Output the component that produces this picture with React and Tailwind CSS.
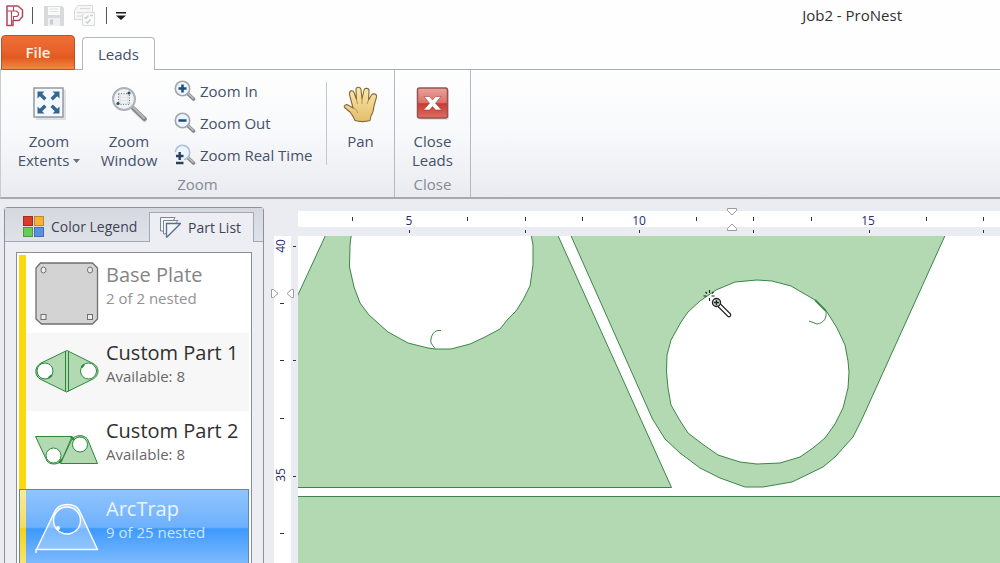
import React from "react";

function AppLogo() {
  return (
    <svg width="18" height="22" viewBox="0 0 18 22" fill="none" stroke="#b5465c" strokeWidth="1.5">
      <path d="M1 1H12L16.500 5V11.500L13 15.500H7V20.500H1Z" strokeLinejoin="round" />
      <path d="M5.500 20V6H1.500M5.500 6H10.500L12.500 8V10L11 11.500H7.500V15M7.500 1.500V6" strokeWidth="1.100" />
    </svg>
  );
}

function SaveIcon() {
  return (
    <svg width="20" height="20" viewBox="0 0 20 20">
      <path d="M0 0H18L20 2V20H0Z" fill="#d8dadd" />
      <rect x="4" y="1" width="12" height="8" fill="#fafafa" />
      <path d="M6 3H14M6 5.500H14" stroke="#dfe1e4" />
      <rect x="4" y="12" width="12" height="8" fill="#eff0f2" />
      <rect x="6" y="13.500" width="3" height="5" fill="#c9ccd0" />
    </svg>
  );
}

function ChecklistIcon() {
  return (
    <svg width="22" height="21" viewBox="0 0 22 21" fill="none" stroke="#d8dadd">
      <path d="M3.500 .5H18.500V14.500H.5V5.500Z" fill="#f6f6f7" />
      <path d="M6 3.500H16M3 7.500H9M3 11H8" />
      <path d="M10.500 7.500H20.500V20.500H8.500V10Z" fill="#fafafa" />
      <path d="M10.500 12L12 13.500L14.500 10.500M16 10.500H19M12 16.500L13.500 18L16.500 14.500" strokeWidth="1.500" stroke="#cccfd3" />
    </svg>
  );
}

function ExtentsIcon() {
  return (
    <svg width="34" height="34" viewBox="0 0 34 34">
      <rect x="4" y="4" width="30" height="30" fill="#000" opacity=".1" />
      <rect x="2" y="2" width="29" height="29" fill="#f3f9ff" stroke="#9599a0" strokeWidth="1.500" />
      {["0", "90", "180", "270"].map((a) => (
        <path
          key={a}
          transform={`rotate(${a} 16.500 16.500)`}
          d="M5.500 5.500H12.500L10.200 7.800L14.500 12.100L12.100 14.500L7.800 10.200L5.500 12.500Z"
          fill="#36658f"
        />
      ))}
    </svg>
  );
}

function WindowIcon() {
  return (
    <svg width="36" height="37" viewBox="0 0 36 37">
      <g transform="translate(1 1)">
        <path d="M21 22L34 34" stroke="#000" strokeWidth="5" opacity=".1" />
        <path d="M20 20L32.500 32" stroke="#85878a" strokeWidth="4.500" strokeLinecap="round" />
        <path d="M21 20L32 31" stroke="#b9babb" strokeWidth="1.800" strokeLinecap="round" />
        <circle cx="12" cy="12" r="11" fill="#eef1f5" stroke="#aeb1b5" strokeWidth="2" />
        <rect x="6.500" y="6.500" width="11" height="11" fill="#e1e3e7" stroke="#7b848f" strokeDasharray="1 1.500" />
        <path d="M9 9H15M9 12H15M9 15H15" stroke="#fff" />
        <circle cx="17" cy="6" r="1.600" fill="#34495e" />
        <circle cx="6" cy="16.500" r="1.600" fill="#34495e" />
      </g>
    </svg>
  );
}

function MagnifierIcon({ kind }) {
  return (
    <svg width="22" height="22" viewBox="0 0 22 22" className="shrink-0">
      <path d="M13 13L19.500 19" stroke="#858789" strokeWidth="3.600" strokeLinecap="round" />
      <path d="M13.500 13L19 18" stroke="#bfc0c1" strokeWidth="1.500" strokeLinecap="round" />
      <circle cx="8.500" cy="8.500" r="7.200" fill="#eaf5fd" stroke={kind === "real" ? "#a9c1d6" : "#a2a6ab"} strokeWidth="1.600" />
      {kind === "in" && <path d="M4.500 8.500H12.500M8.500 4.500V12.500" stroke="#1f4b80" strokeWidth="2.500" />}
      {kind === "out" && <path d="M4.500 8.500H12.500" stroke="#1f4b80" strokeWidth="2.500" />}
      {kind === "real" && (
        <>
          <path d="M0 8H10V22H0Z" fill="#f3f5f9" opacity=".85" />
          <path d="M2 12H9.500M5.700 8V16M2 19H9.500" stroke="#26405f" strokeWidth="2.400" />
        </>
      )}
    </svg>
  );
}

function HandIcon() {
  return (
    <svg width="36" height="37" viewBox="0 0 36 37">
      <defs>
        <linearGradient id="skin" x1="0" y1="0" x2="0" y2="1">
          <stop offset="0" stopColor="#fbe9ab" />
          <stop offset="1" stopColor="#e3bd6b" />
        </linearGradient>
      </defs>
      <path
        d="M12 34.500C11 31 9 29 7 26L1.500 21.500C.5 19.500 3 18 5 19L10 22L6.500 8.500C6 4.500 10 3.500 11 6.500L13.500 13.500L13 3.500C13 .5 17.500 .5 18 3.500L19 13L21 4C21.500 1.500 26 2 26 4.500L25.500 14L28.500 9C30 7 34.500 8 33.500 11L31 20C30.500 25 30 27 28 30L27 34.500C23 36 16 36 12 34.500Z"
        fill="url(#skin)" stroke="#87683a" strokeWidth="1.100" strokeLinejoin="round"
      />
      <path d="M13.500 13.500L14.500 18M19 13V18M25.500 14L24 18M10 22C13 22.500 14.500 25 14.500 27" fill="none" stroke="#b48c45" strokeWidth=".9" />
    </svg>
  );
}

function CloseIcon() {
  return (
    <svg width="34" height="35" viewBox="0 0 34 35">
      <defs>
        <linearGradient id="red" x1="0" y1="0" x2="0" y2="1">
          <stop offset="0" stopColor="#e9a39c" />
          <stop offset=".5" stopColor="#dc7067" />
          <stop offset=".52" stopColor="#c93a31" />
          <stop offset="1" stopColor="#dd6d62" />
        </linearGradient>
      </defs>
      <rect x="3" y="4" width="30" height="30" rx="2" fill="#000" opacity=".1" />
      <rect x="1.500" y="2" width="30" height="30" rx="2" fill="url(#red)" stroke="#8f5550" strokeWidth="1.500" />
      <path d="M8 10.500H13.500L16.500 14L19.500 10.500H25L19.500 17.200L25.500 24H19.500L16.500 20.500L13.500 24H7.500L13.500 17.200Z" fill="#fff" stroke="#8b2f29" strokeWidth=".5" />
    </svg>
  );
}

function LegendIcon() {
  return (
    <svg width="21" height="21" viewBox="0 0 21 21" strokeWidth="1">
      <rect x=".5" y=".5" width="9" height="9" fill="#d93a2b" stroke="#a32c22" />
      <rect x="11.500" y=".5" width="9" height="9" fill="#f5b335" stroke="#b98a35" />
      <rect x=".5" y="11.500" width="9" height="9" fill="#69cc59" stroke="#4c9a45" />
      <rect x="11.500" y="11.500" width="9" height="9" fill="#5a8fe6" stroke="#446cae" />
    </svg>
  );
}

function PartsIcon() {
  return (
    <svg width="21" height="21" viewBox="0 0 21 21" fill="#f3f6fb" stroke="#7e8590">
      <path d="M.5 14V.5H15L13 4L3 14Z" />
      <path d="M3.500 17V3.500H18L15 7L5 17Z" />
      <path d="M6.500 20V6.500H20.500L7 20Z" stroke="#5a6f8e" strokeWidth="1.300" />
    </svg>
  );
}

const partGreen = { fill: "#b3d9b3", stroke: "#278a38" };

function PlateThumb() {
  return (
    <svg width="64" height="64" viewBox="0 0 64 64" fill="#d3d3d3" stroke="#6f6f6f">
      <path d="M5.500 1H57.500L62.500 6V57L57.500 62H6.500L1 57V6Z" strokeWidth="1.300" />
      <g fill="#ececec">
        <ellipse cx="8.500" cy="8" rx="2.500" ry="3" />
        <ellipse cx="55" cy="8" rx="2.500" ry="3" />
        <rect x="6" y="52.500" width="5" height="5" />
        <rect x="52.500" y="52.500" width="5" height="5" />
      </g>
    </svg>
  );
}

function PairThumb() {
  return (
    <svg width="64" height="64" viewBox="0 0 64 64" {...partGreen}>
      <path d="M32 10.500L57 23C65 26 65 36 57 39.500L31.500 52L6 39.500C-1 36 -1 27 6 23Z" />
      <path d="M30.500 11.500V51.500M33.500 11.500V51.500" />
      <g fill="#fff">
        <circle cx="10" cy="31" r="8" />
        <circle cx="53.500" cy="31" r="8" />
      </g>
      <path d="M13.500 38L17 35M46.500 27.500L49 24.500" strokeWidth="2" />
    </svg>
  );
}

function NestedThumb() {
  return (
    <svg width="64" height="64" viewBox="0 0 64 64" {...partGreen}>
      <path d="M.5 18.500H37L26.500 43C22.500 47 15 47 12 43Z" />
      <path d="M25.500 45.500L37 21C41 16.500 49 16.500 52.500 21L62.500 45.500Z" />
      <g fill="#fff">
        <circle cx="18.500" cy="37.500" r="7.500" />
        <circle cx="45" cy="26.500" r="7.500" />
      </g>
      <path d="M24 45L27 41M36 18.500L39 22" strokeWidth="2" />
    </svg>
  );
}

function TrapThumb() {
  return (
    <svg width="64" height="64" viewBox="0 0 64 64" fill="#fff" fillOpacity=".3" stroke="#fff" strokeWidth="1.400">
      <path
        fillRule="evenodd"
        d="M1 54.500L19.500 16C24 6 41 6 45 16L62.500 53.500H1V57M18.500 24.500A13.500 13.500 0 1 0 45.500 24.500A13.500 13.500 0 1 0 18.500 24.500Z"
      />
      <circle cx="23" cy="32" r="1.300" fillOpacity="1" />
    </svg>
  );
}

function BigCommand({ icon, lines, menu, className }) {
  return (
    <button type="button" className={`flex flex-col items-center pt-4 ${className}`}>
      <span className="flex h-[46px] items-start justify-center">{icon}</span>
      <span>{lines[0]}</span>
      {lines[1] && (
        <span className="flex items-center">
          {lines[1]}
          {menu && (
            <svg width="7" height="4" viewBox="0 0 7 4" className="ml-1">
              <path d="M0 0H7L3.500 4Z" fill="#69707c" />
            </svg>
          )}
        </span>
      )}
    </button>
  );
}

function SmallCommand({ kind, children }) {
  return (
    <button type="button" className="flex h-8 items-center gap-1 whitespace-nowrap">
      <MagnifierIcon kind={kind} />
      {children}
    </button>
  );
}

const parts = [
  { name: "Base Plate", note: "2 of 2 nested", thumb: <PlateThumb />, look: "bg-white text-[#858585]", sub: "text-[#929292]", bar: "bg-[#fbd90f]" },
  { name: "Custom Part 1", note: "Available: 8", thumb: <PairThumb />, look: "bg-[#f7f7f7] text-[#303030]", sub: "text-[#686868]", bar: "bg-[#fbd90f]" },
  { name: "Custom Part 2", note: "Available: 8", thumb: <NestedThumb />, look: "bg-white text-[#303030]", sub: "text-[#686868]", bar: "bg-[#fbd90f]" },
  {
    name: "ArcTrap",
    note: "9 of 25 nested",
    thumb: <TrapThumb />,
    look: "bg-[linear-gradient(#91c5ff_0%,#6db0fc_49%,#3d99fc_51%,#84beff_100%)] text-[#e9f4ff] outline outline-1 -outline-offset-1 outline-[#5b87a8]",
    sub: "text-[#cfe6ff]",
    bar: "bg-[linear-gradient(#f9e9a0_0%,#f5dc5d_49%,#f2d319_51%,#f9e67a_100%)]",
  },
];

function PartList() {
  return (
    <aside className="ml-1 mt-2 flex w-[260px] shrink-0 flex-col rounded-t-sm border border-b-0 border-[#8d9199] bg-[#eceef3] text-[#3d4453]">
      <div className="flex h-[34px] shrink-0 bg-gradient-to-b from-[#d5d8df] to-[#dfe2e9]">
        <button type="button" className="flex w-36 items-center gap-[7px] whitespace-nowrap border-b border-[#a4a8b2] pl-[18px] pt-1 text-[14px]">
          <LegendIcon />
          Color Legend
        </button>
        <button type="button" className="mt-1 flex w-[105px] items-center gap-[7px] whitespace-nowrap border border-b-0 border-[#a4a8b2] bg-[#eceef3] pl-2.5 text-[14px]">
          <PartsIcon />
          Part List
        </button>
        <div className="flex-1 border-b border-[#a4a8b2]" />
      </div>
      <ul className="mx-[11px] mt-2.5 min-h-0 flex-1 overflow-hidden border border-b-0 border-[#8a8d94] bg-white px-0.5 pt-0.5">
        {parts.map((p) => (
          <li key={p.name}>
            <button type="button" className={`flex h-[78px] w-full text-left ${p.look}`}>
              <span className={`h-full w-[7px] shrink-0 ${p.bar}`} />
              <span className="ml-[9px] mt-[7px] shrink-0">{p.thumb}</span>
              <span className="ml-[7px] mt-[7px] flex flex-col whitespace-nowrap">
                <span className="text-[20px] leading-[26px]">{p.name}</span>
                <span className={`text-[15px] leading-5 ${p.sub}`}>{p.note}</span>
              </span>
            </button>
          </li>
        ))}
      </ul>
    </aside>
  );
}

const hNumbers = [[111, "5"], [341, "10"], [570, "15"]];
const hMinor = [54, 169, 227, 284, 398, 455, 513, 628, 685];
const hMajor = [111, 227, 341, 455, 571, 685];

function TopRuler() {
  return (
    <svg className="h-[29px] w-full shrink-0" overflow="hidden">
      <rect y="4" width="100%" height="16" fill="#fff" />
      <g fill="#303040">
        {hMinor.map((x) => <rect key={x} x={x} y="10" width="1" height="4" />)}
        {hMajor.map((x) => <rect key={x} x={x} y="23" width="1" height="3" />)}
      </g>
      <g fontSize="12" fontWeight="500" fill="#2c2c72" textAnchor="middle">
        {hNumbers.map(([x, n]) => <text key={n} x={x} y="18">{n}</text>)}
      </g>
      <path d="M429.500 1.500H438.500V3.500L434 8L429.500 3.500ZM429.500 23.500H438.500V21.500L434 17L429.500 21.500Z" fill="#fff" stroke="#9c9c9c" />
    </svg>
  );
}

function SideRuler() {
  return (
    <svg className="h-full w-[31px] shrink-0" overflow="hidden">
      <rect x="7" width="17" height="100%" fill="#fff" />
      <g fill="#303040">
        {[67, 124, 182, 297].map((y) => <rect key={y} x="13" y={y} width="4" height="1" />)}
        {[10, 124, 240].map((y) => <rect key={y} x="26" y={y} width="3" height="1" />)}
      </g>
      <g fontSize="12" fontWeight="500" fill="#2c2c72" textAnchor="middle">
        <text transform="translate(18 10) rotate(-90)">40</text>
        <text transform="translate(18 239) rotate(-90)">35</text>
      </g>
      <path d="M4.500 53.500V61.500H6.500L11 57.500L6.500 53.500ZM26.500 53.500V61.500H24.500L20 57.500L24.500 53.500Z" fill="#fff" stroke="#9c9c9c" />
    </svg>
  );
}

function NestView() {
  return (
    <svg className="h-full min-w-0 flex-1 bg-white" overflow="hidden">
      <g transform="translate(-298 -236)">
        <g fill="#b3d9b3" stroke="#3b8547">
          <path d="M290 312L328.500 229H555L671.500 487.500H290Z" />
          <path d="M568 229L652.500 419L665 439L680 453L700 468L720 478L745 487H763L792 482L823 467L835 457L853 437L862 419L948 229Z" />
          <rect x="290" y="496.500" width="3000" height="2000" />
          <path d="M350 245L352 229H530L533 245V265L530 286L523 300L516 311L508 319L500 329L485 337L470 344L451 349H435L428 348L408 343L388 332L369 315L360 303L354 287L349.500 267Z" fill="#fff" />
          <path d="M757 280L772 281L791 286L815 300L827 312L837 328L845 345L848 361L849 372L848 388L843 408L835 424L825 438L813 448L800 457L780 463L757 464L740 462L718 455L701 443L688 433L679 419L671 405L668 388L666.500 372L667 355L671 340L681 322L688 312L700 301L716 290L735 282Z" fill="#fff" />
        </g>
        <g fill="none" stroke="#3b8547">
          <path d="M441 330.500H438C433 331 430 338 431 343L435 348.500" />
          <path d="M809 321L817 324C824 323 827 318 826 311" />
          <path d="M815 300L826 311" strokeWidth="1.800" />
        </g>
        <path d="M709.500 290V293M709.500 298V301M703.500 296H706.500M711.500 296H714.500M705.500 292L707 293.500M713.500 292L712 293.500" fill="none" stroke="#152515" strokeWidth="1.100" />
        <path d="M719.500 305.500L729 315" stroke="#222" strokeWidth="4.600" strokeLinecap="round" />
        <path d="M719.500 305.500L729 315" stroke="#fff" strokeWidth="2.400" strokeLinecap="round" />
        <circle cx="716.500" cy="302.500" r="4" fill="#d5ddd5" stroke="#222" strokeWidth="1.400" />
        <path d="M714 302.500H719M716.500 300V305" stroke="#222" strokeWidth="1.300" />
      </g>
    </svg>
  );
}

export default function App() {
  return (
    <div className="flex h-screen flex-col overflow-hidden bg-[#eaecf1] font-['Open_Sans','Noto_Sans',sans-serif] text-[15px] leading-[19px] text-[#44526b]">
      <header className="flex h-[35px] shrink-0 items-start bg-[#fefefe] pl-1.5">
        <div className="flex h-[31px] items-center">
          <AppLogo />
          <span className="ml-2 h-[17px] w-px bg-[#555]" />
          <button type="button" aria-label="Save" className="ml-[11px]"><SaveIcon /></button>
          <button type="button" aria-label="Job checklist" className="ml-2.5"><ChecklistIcon /></button>
          <span className="ml-2.5 h-[17px] w-px bg-[#555]" />
          <button type="button" aria-label="Customize toolbar" className="ml-[9px]">
            <svg width="10" height="8" viewBox="0 0 10 8"><path d="M0 0H10V1.500H0ZM0 3.500H10L5 8Z" fill="#1c1c1c" /></svg>
          </button>
        </div>
        <h1 className="ml-auto mr-[98px] flex h-[31px] items-center text-[15px] text-[#303030]">Job2 - ProNest</h1>
      </header>

      <nav className="flex h-[35px] shrink-0 bg-[#fefefe]">
        <div className="w-px border-b border-[#a9adb5]" />
        <button type="button" className="w-[74px] rounded-t border border-[#b5532a] bg-[linear-gradient(#ee6f38_0%,#e8622a_45%,#e25a20_65%,#f28a42_100%)] text-[15px] font-semibold text-[#fff1e6]">
          File
        </button>
        <div className="w-[7px] border-b border-[#a9adb5]" />
        <button type="button" className="mt-0.5 w-[73px] rounded-t border border-b-0 border-[#b1b5bc] bg-[#fefefe] text-[15px]">
          Leads
        </button>
        <div className="flex-1 border-b border-[#a9adb5]" />
      </nav>

      <section className="flex h-[129px] shrink-0 border-b-2 border-l border-b-[#a6a9b2] border-l-[#c9ccd3] bg-gradient-to-b from-[#fefefe] via-[#f8f9fb] to-[#e9ebf1]">
        <div className="flex w-[394px] flex-col border-r border-[#b4b8c0]">
          <div className="flex flex-1">
            <BigCommand className="ml-2 w-20" icon={<ExtentsIcon />} lines={["Zoom", "Extents"]} menu />
            <BigCommand className="w-20" icon={<WindowIcon />} lines={["Zoom", "Window"]} />
            <div className="ml-[5px] flex w-[152px] flex-col pt-[5px]">
              <SmallCommand kind="in">Zoom In</SmallCommand>
              <SmallCommand kind="out">Zoom Out</SmallCommand>
              <SmallCommand kind="real">Zoom Real Time</SmallCommand>
            </div>
            <div className="mt-3 h-[83px] w-px bg-[#c3c6cd]" />
            <BigCommand className="flex-1" icon={<HandIcon />} lines={["Pan"]} />
          </div>
          <h2 className="pb-[3px] text-center text-[#858a94]">Zoom</h2>
        </div>
        <div className="flex w-[76px] flex-col border-r border-[#b4b8c0]">
          <BigCommand className="flex-1" icon={<CloseIcon />} lines={["Close", "Leads"]} />
          <h2 className="pb-[3px] text-center text-[#858a94]">Close</h2>
        </div>
      </section>

      <main className="flex min-h-0 flex-1">
        <PartList />
        <div className="ml-[3px] flex min-w-0 flex-1 flex-col pt-2">
          <div className="flex shrink-0 pl-[31px]">
            <TopRuler />
          </div>
          <div className="flex min-h-0 flex-1">
            <SideRuler />
            <NestView />
          </div>
        </div>
      </main>
    </div>
  );
}
